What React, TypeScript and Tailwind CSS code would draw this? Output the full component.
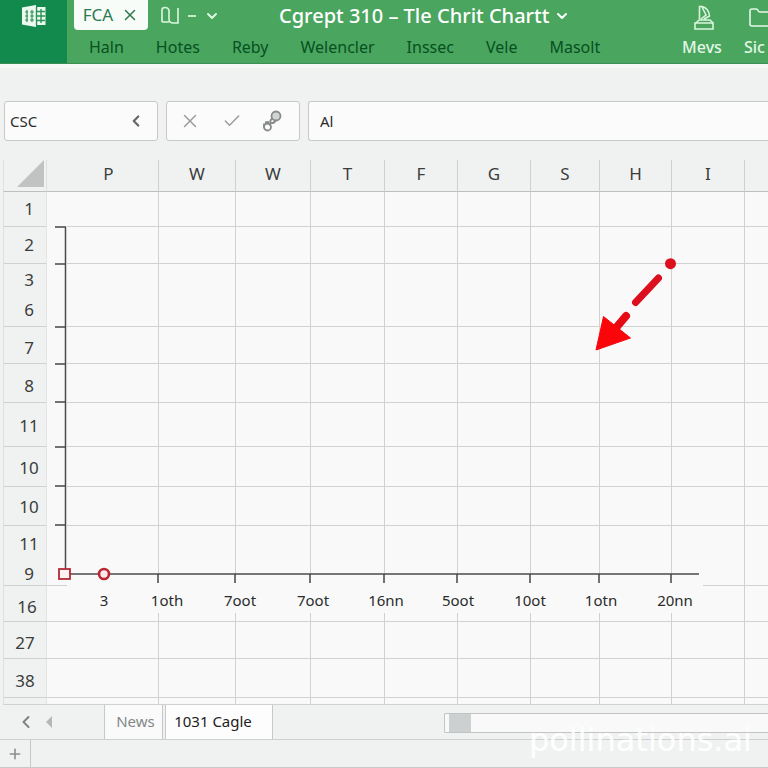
import React from 'react';
import { Check, ChevronDown, ChevronLeft, Folder, Plus, X } from 'lucide-react';

const MENU = ['Haln', 'Hotes', 'Reby', 'Welencler', 'Inssec', 'Vele', 'Masolt'];

const COLUMNS = [
  { label: 'P', width: 'w-[112px]', pad: 'pl-3' },
  { label: 'W', width: 'w-[77px]', pad: 'pl-0' },
  { label: 'W', width: 'w-[75px]', pad: 'pl-0' },
  { label: 'T', width: 'w-[74px]', pad: 'pl-0' },
  { label: 'F', width: 'w-[73px]', pad: 'pl-0' },
  { label: 'G', width: 'w-[73px]', pad: 'pl-0' },
  { label: 'S', width: 'w-[69px]', pad: 'pl-0' },
  { label: 'H', width: 'w-[72px]', pad: 'pl-0' },
  { label: 'I', width: 'w-[73px]', pad: 'pl-0' },
  { label: '', width: '', pad: 'pl-0' },
];

const ROWS = [
  { labels: ['1'], height: 'h-[35px]', pad: 'pt-0' },
  { labels: ['2'], height: 'h-[37px]', pad: 'pt-0' },
  { labels: ['3', '6'], height: 'h-[63px]', pad: 'pt-0' },
  { labels: ['7'], height: 'h-[37px]', pad: 'pt-[6px]' },
  { labels: ['8'], height: 'h-[39px]', pad: 'pt-[6px]' },
  { labels: ['11'], height: 'h-[44px]', pad: 'pt-[2px]' },
  { labels: ['10'], height: 'h-[40px]', pad: 'pt-[2px]' },
  { labels: ['10'], height: 'h-[39px]', pad: 'pt-[2px]' },
  { labels: ['11', '9'], height: 'h-[60px]', pad: 'pt-[6px]' },
  { labels: ['16'], height: 'h-[36px]', pad: 'pt-[6px] pr-1' },
  { labels: ['27'], height: 'h-[37px]', pad: 'pt-[6px] pr-2' },
  { labels: ['38'], height: 'h-[39px]', pad: 'pt-[6px] pr-2' },
  { labels: [], height: 'h-[7px]', pad: 'pt-0' },
];

// Chart coordinates start at the top left corner of cell P1
const Y_TICKS = [35, 72, 135, 172, 210, 255, 294, 333];
const X_TICKS = [111, 188, 263, 337, 410, 483, 552, 624];
const X_LABELS = [
  { x: 57, text: '3' },
  { x: 120, text: '1oth' },
  { x: 193, text: '7oot' },
  { x: 266, text: '7oot' },
  { x: 339, text: '16nn' },
  { x: 411, text: '5oot' },
  { x: 483, text: '10ot' },
  { x: 554, text: '1otn' },
  { x: 628, text: '20nn' },
];

const AppLogo: React.FC = () => (
  <svg width="26" height="24" viewBox="0 0 26 24" fill="none">
    <path d="M1 3.5 15 1v22L1 20.5z" fill="#eefaf0" />
    <path d="M15 3h9.5v18H15" fill="#eefaf0" />
    <path d="M15.5 3v18M16 7.500h8M16 12h8M16 16.500h8M20 5v14" stroke="#2a9257" strokeWidth="1.400" />
    <path d="M4 8h3M9 8h4M4 12h3M9 12h4M4 16h3M9 16h4M6 6v12M11 6v12" stroke="#2a9257" strokeWidth="1.200" />
  </svg>
);

const StampIcon: React.FC = () => (
  <svg width="22" height="26" viewBox="0 0 22 26" fill="none" stroke="#d9f5dd" strokeWidth="1.600">
    <path d="M2 18h18v6H2z" />
    <path d="M3 18l3-3h11l3 3M6.500 14V1.500h2.500c4 1 7 4 7.500 9.500L11 14M9 2l4 8-5 4" />
  </svg>
);

const ChainIcon: React.FC = () => (
  <svg width="20" height="22" viewBox="0 0 20 22" fill="none" stroke="#888b8b" strokeWidth="1.800">
    <circle cx="14" cy="6" r="4.500" fill="#d3d5d5" />
    <path d="M10.500 8.500c-2 1-2.500 3-2 4.500 2 .5 4-.5 5-2.500" />
    <path d="M9.500 13 7 15M3 12.500l4-.5M2 13.500v4" />
    <circle cx="5.500" cy="17" r="3.500" />
  </svg>
);

const Header: React.FC = () => {
  return (
    <header className="flex h-16 overflow-hidden border-b border-[#3c8f52] bg-[#4aa55f]">
      <div className="flex w-[67px] shrink-0 justify-center bg-[#128a4d] pt-1">
        <AppLogo />
      </div>

      <div className="min-w-0 flex-1 pl-[7px]">
        <div className="flex h-8 items-start whitespace-nowrap text-white">
          <button className="flex h-[30px] w-[74px] shrink-0 items-center justify-center gap-2 rounded-b-sm bg-[#f7fcf8] text-[17px] text-[#2c7a50]">
            FCA
            <X size={18} strokeWidth={2} />
          </button>
          <button aria-label="Layout" className="ml-3 mt-[6px] flex h-5 items-center gap-2 text-[#dcf7e0]">
            <svg width="20" height="20" viewBox="0 0 20 20" fill="none" stroke="currentColor" strokeWidth="1.600">
              <path d="M2 16V4q0-2.500 3-2.500T9 4v9q0 4 4.500 4H18V2M2 16h7" />
            </svg>
            <span className="h-[2px] w-2 bg-[#c2ebc9]" />
            <ChevronDown size={16} strokeWidth={3} />
          </button>
          <h1 className="ml-[59px] text-xl leading-8 font-medium">Cgrept 310 – Tle Chrit Chartt</h1>
          <button aria-label="Title options" className="ml-[5px] flex h-8 items-center">
            <ChevronDown size={16} strokeWidth={3} />
          </button>
        </div>
        <nav className="flex gap-8 pl-[15px] text-base leading-[30px] text-[#07501f]">
          {MENU.map((item) => (
            <a key={item} href="#">
              {item}
            </a>
          ))}
        </nav>
      </div>

      <div className="flex shrink-0 gap-[22px] pt-1 text-base leading-[30px] font-medium text-[#e3f8e6]">
        <button className="flex w-10 flex-col items-center">
          <span className="flex h-7 items-center pl-1">
            <StampIcon />
          </span>
          Mevs
        </button>
        <button className="flex w-6 flex-col items-start">
          <span className="flex h-7 items-center pl-1">
            <Folder size={24} strokeWidth={1.6} className="max-w-none shrink-0" />
          </span>
          Sic
        </button>
      </div>
    </header>
  );
};

const FormulaBar: React.FC = () => {
  return (
    <div className="flex gap-2 border-t-4 border-[#f6f8f6] pt-[33px] pl-1 text-[15px] text-[#2b2d2d]">
      <div className="flex h-10 w-[154px] shrink-0 items-center justify-between rounded-[3px] border border-[#c6c9c8] bg-[#fafbfa] pr-3 pl-[5px]">
        <input aria-label="Name box" defaultValue="CSC" className="w-20 bg-transparent outline-none" />
        <button aria-label="Collapse" className="text-[#666969]">
          <ChevronLeft size={18} strokeWidth={3} />
        </button>
      </div>
      <div className="flex h-10 w-[134px] shrink-0 items-center justify-between rounded-[3px] border border-[#c6c9c8] bg-[#fafbfa] pr-[17px] pl-3 text-[#9a9d9d]">
        <button aria-label="Cancel">
          <X size={22} strokeWidth={1.6} />
        </button>
        <button aria-label="Enter">
          <Check size={20} strokeWidth={1.8} />
        </button>
        <button aria-label="Link">
          <ChainIcon />
        </button>
      </div>
      <input
        aria-label="Formula"
        defaultValue="Al"
        className="h-10 min-w-0 flex-1 rounded-l-[3px] border border-r-0 border-[#c6c9c8] bg-[#fafbfa] px-[11px] outline-none"
      />
    </div>
  );
};

const Chart: React.FC = () => {
  return (
    <svg className="pointer-events-none absolute top-8 left-[44px]" width="700" height="430" fill="none">
      {/* Blank margins behind the axes */}
      <rect x="0" y="20" width="20" height="369" fill="#f8f9f8" />
      <rect x="20" y="383" width="636" height="38" fill="#f8f9f8" />

      <path d="M18.500 35V382M22 382H652" stroke="#4a4b4b" strokeWidth="1.500" />
      {Y_TICKS.map((y) => (
        <path key={y} d={`M8 ${y}H19`} stroke="#444545" strokeWidth="1.500" />
      ))}
      {X_TICKS.map((x) => (
        <path key={x} d={`M${x} 382V391`} stroke="#444545" strokeWidth="1.500" />
      ))}
      {X_LABELS.map(({ x, text }) => (
        <text key={x} x={x} y="414" textAnchor="middle" fontSize="15" fill="#2b2c2c">
          {text}
        </text>
      ))}

      <rect x="12" y="377" width="11" height="10" fill="#fdf1f1" stroke="#b22a35" strokeWidth="1.800" />
      <circle cx="57" cy="382" r="5" fill="#fbe9ea" stroke="#bb2632" strokeWidth="2.600" />

      {/* Dashed arrow */}
      <circle cx="623.500" cy="71.700" r="5.500" fill="#dc0f1e" />
      <path d="M611.500 86 588.500 110.500" stroke="#dc0f1e" strokeWidth="7" strokeLinecap="round" />
      <path d="M579 124 568 137" stroke="#e60a14" strokeWidth="8" strokeLinecap="round" />
      <path d="M549 158 556.500 124.500 583.500 146z" fill="#fa0509" stroke="#fa0509" strokeLinejoin="round" />
    </svg>
  );
};

const Sheet: React.FC = () => {
  return (
    <main className="mt-[19px] ml-[3px] overflow-hidden">
      <div className="relative">
        <table className="w-full table-fixed border-separate border-spacing-0 text-[17px] leading-5 text-[#3b3d3d]">
          <thead>
            <tr className="h-8">
              <th className="w-[44px] border-r border-b border-l border-r-[#dddfde] border-b-[#bcbfbe] border-l-[#dfe1e0] p-0 align-top">
                <svg width="27" height="27" viewBox="0 0 27 27" className="ml-auto mr-[2px]" aria-label="Select all">
                  <path d="M27 0v27H0z" fill="#c0c3c2" />
                </svg>
              </th>
              {COLUMNS.map((column, i) => (
                <th
                  key={i}
                  className={`${column.width} ${column.pad} border-r border-b border-r-[#cfd1d0] border-b-[#bcbfbe] pt-0 pr-0 pb-1 font-normal last:border-r-0`}
                >
                  {column.label}
                </th>
              ))}
            </tr>
          </thead>
          <tbody>
            {ROWS.map((row, i) => (
              <tr key={i} className={row.height}>
                <th
                  className={`${row.pad} border-r border-b border-l border-r-[#e2e4e3] border-b-[#cfd1d0] border-l-[#dfe1e0] bg-[#f0f2f1] pb-0 pl-2 font-normal`}
                >
                  <div className="flex flex-col gap-[10px]">
                    {row.labels.map((label) => (
                      <span key={label}>{label}</span>
                    ))}
                  </div>
                </th>
                {COLUMNS.map((_, j) => (
                  <td key={j} className="border-r border-b border-[#d0d2d1] bg-[#f8f9f8] p-0 last:border-r-0" />
                ))}
              </tr>
            ))}
          </tbody>
        </table>
        <Chart />
      </div>
    </main>
  );
};

const SheetTabs: React.FC = () => {
  return (
    <footer className="relative text-[15px]">
      <div className="flex h-[35px] border-b border-[#cdd0cf]">
        <div className="flex w-[104px] shrink-0 items-center gap-1 pl-4 text-[#a0a3a3]">
          <button aria-label="Previous sheet" className="text-[#808383]">
            <ChevronLeft size={20} strokeWidth={2.4} />
          </button>
          <button aria-label="First sheet">
            <svg width="14" height="14" viewBox="0 0 14 14">
              <path d="M12 1v12L6 7z" fill="#b5b8b8" />
            </svg>
          </button>
        </div>
        <button className="w-[59px] shrink-0 border-x border-[#c6c9c8] bg-[#f9faf9] pb-[2px] pl-1 text-[#858888]">News</button>
        <button className="ml-[2px] w-[108px] shrink-0 border-x border-[#c6c9c8] bg-[#fcfdfc] pr-3 pb-[2px] whitespace-nowrap text-[#1f2121]">
          1031 Cagle
        </button>
        <div className="mt-2 ml-auto h-5 w-[324px] rounded-l-xs border border-r-0 border-[#c2c5c4] bg-[#f8f9f8] pl-1">
          <div className="h-full w-[22px] bg-[#cdd0d1]" />
        </div>
      </div>
      <div className="flex h-7 border-b border-[#c6c9c8]">
        <button aria-label="Add sheet" className="flex w-[31px] items-center justify-center border-r border-[#c6c9c8] text-[#8b8e8e]">
          <Plus size={16} strokeWidth={2.4} />
        </button>
      </div>
      <span className="absolute right-4 bottom-2 font-['DejaVu_Sans'] text-[32px] leading-10 text-white/90">
        pollinations.ai
      </span>
    </footer>
  );
};

const App: React.FC = () => {
  return (
    <div className="min-h-screen overflow-hidden bg-[#f0f2f1] font-['Noto_Sans',sans-serif]">
      <Header />
      <FormulaBar />
      <Sheet />
      <SheetTabs />
    </div>
  );
};

export default App;
